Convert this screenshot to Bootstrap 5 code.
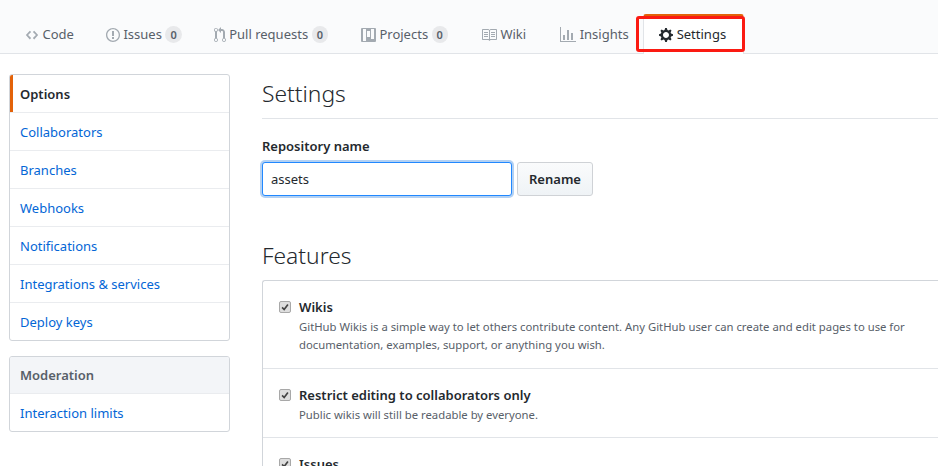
<!DOCTYPE html>
<html lang="en">
  <head>
    <meta charset="utf-8" />
    <title>Settings</title>
    <link href="https://cdn.jsdelivr.net/npm/bootstrap@5.3.3/dist/css/bootstrap.min.css" rel="stylesheet" />
    <style>
      html, body { overflow: hidden; height: 466px; }
      body { font-family: "Noto Sans", "Open Sans", sans-serif; font-size: 13px; color: #24292e; background: #fff; }
      .repo-head { height: 54px; background: #fafbfc; border-bottom: 1px solid #e1e4e8; padding-left: 9px; }
      .repo-tab { height: 39px; padding: 0 16px; color: #586069; gap: 3.5px; text-decoration: none; white-space: nowrap; margin-bottom: -1px; }
      .repo-tab svg { fill: #a3aab1; flex: none; }
      .tab-count { background: rgba(27,31,35,.08); color: #586069; font-size: 11px; font-weight: 600; line-height: 1; padding: 3px 5px; border-radius: 20px; }
      .tab-projects { margin-left: 1px; }
      .tab-wiki { margin-left: 1px; margin-right: 2px; }
      .tab-on { position: relative; background: #fff; color: #24292e; border: 1px solid #e1e4e8; border-top: 3px solid #e36209; border-bottom: 0; border-radius: 3px 3px 0 0; height: 40px; width: 101px; margin-left: -2px; padding: 0 15px 1px; gap: 4px; }
      .tab-on svg { fill: #24292e; }
      .red-box { position: absolute; left: 636px; top: 16px; width: 109px; height: 36px; border: 3px solid #fb1a12; border-radius: 3px; }
      .page-body { padding: 20px 0 0 9px; gap: 32px; width: 938px; }
      .side-col { width: 221px; flex: none; }
      .side-menu { border: 1px solid #d1d5da; border-radius: 3px; margin-bottom: 15px; overflow: hidden; }
      .side-item { display: block; height: 38px; line-height: 38px; padding-left: 10px; color: #0366d6; text-decoration: none; border-top: 1px solid #eaecef; white-space: nowrap; }
      .side-item:first-child { border-top: 0; height: 37px; line-height: 38px; }
      .side-sel { font-weight: 600; color: #24292e; border-left: 3px solid #e36209; padding-left: 7px; }
      .side-title { background: #f3f5f8; font-weight: 600; color: #586069; height: 36px; line-height: 37px; padding-left: 10px; }
      .main-col { flex: 1; min-width: 0; }
      .sec-title { font-size: 22.8px; font-weight: 300; line-height: 32px; padding-bottom: 8px; margin: 0; }
      .title-rule { border-bottom: 1px solid #e1e4e8; height: 45px; line-height: 40px; padding: 0; }
      .feat-title { margin-top: 44px; }
      .field-label { font-weight: 600; margin: 17px 0 6px; line-height: 20px; display: block; }
      .name-input { width: 250px; height: 34px; padding: 6px 8px; font-size: 13px; color: #24292e; border: 1px solid #2188ff; border-radius: 3px; box-shadow: 0 0 0 2px rgba(3,102,214,.3); outline: 0; font-family: inherit; }
      .rename-btn { height: 34px; width: 76px; padding: 1px 0 0; font-size: 13px; font-weight: 600; color: #24292e; border: 1px solid #cfd2d6; border-radius: 3px; background: linear-gradient(#fafbfc, #eff3f6); }
      .rename-gap { gap: 5px; }
      .feature-box { border: 1px solid #d1d5da; border-right: 0; border-radius: 3px 0 0 0; }
      .feature-row { padding: 16px 0 0 16px; gap: 8px; border-top: 1px solid #e1e4e8; height: 69px; }
      .feature-row:first-child { border-top: 0; height: 87px; }
      .feature-name { font-weight: 600; line-height: 20px; }
      .feature-note { font-size: 11.3px; line-height: 18px; color: #586069; margin-top: 1px; }
      .tick { appearance: none; width: 12px; height: 12px; margin: 4px 0 0; flex: none; border: 1px solid #a8a8a8; border-radius: 2px; background: #dedede url("data:image/svg+xml,%3Csvg xmlns='http://www.w3.org/2000/svg' viewBox='0 0 12 12'%3E%3Cpath d='M2.5 6.5 5 9l4.5-6' fill='none' stroke='%23444' stroke-width='2'/%3E%3C/svg%3E") center / 10px no-repeat; }
    </style>
  </head>
  <body>
    <header class="repo-head d-flex align-items-end">
      <a class="repo-tab d-flex align-items-center" href="#">
        <svg width="14" height="14" viewBox="0 0 14 16"><path d="M9.5 3 8 4.5 11.5 8 8 11.5 9.5 13 14 8zm-5 0L0 8l4.5 5L6 11.5 2.5 8 6 4.5z"/></svg>Code</a>
      <a class="repo-tab d-flex align-items-center" href="#">
        <svg width="14" height="16" viewBox="0 0 14 16"><path d="M7 2.3c3.14 0 5.7 2.56 5.7 5.7s-2.56 5.7-5.7 5.7A5.71 5.71 0 0 1 1.3 8c0-3.14 2.56-5.7 5.7-5.7zM7 1C3.14 1 0 4.14 0 8s3.14 7 7 7 7-3.14 7-7-3.14-7-7-7zm1 3H6v5h2zm0 6H6v2h2z"/></svg>Issues<span class="tab-count">0</span></a>
      <a class="repo-tab d-flex align-items-center" href="#">
        <svg width="12" height="16" viewBox="0 0 12 16"><path d="M11 11.28V5c-.03-.78-.34-1.47-.94-2.06C9.46 2.35 8.78 2.03 8 2H7V0L4 3l3 3V4h1c.27.02.48.11.69.31.21.2.3.42.31.69v6.28A1.993 1.993 0 0 0 10 15a1.993 1.993 0 0 0 1-3.72zm-1 2.92c-.66 0-1.2-.55-1.2-1.2 0-.65.55-1.2 1.2-1.2.65 0 1.2.55 1.2 1.2 0 .65-.55 1.2-1.2 1.2zM4 3c0-1.11-.89-2-2-2a1.993 1.993 0 0 0-1 3.72v6.56A1.993 1.993 0 0 0 2 15a1.993 1.993 0 0 0 1-3.72V4.72c.59-.34 1-.98 1-1.72zm-.8 10c0 .66-.55 1.2-1.2 1.2-.65 0-1.2-.55-1.2-1.2 0-.65.55-1.2 1.2-1.2.65 0 1.2.55 1.2 1.2zM2 4.2C1.34 4.2.8 3.65.8 3c0-.65.55-1.2 1.2-1.2.65 0 1.2.55 1.2 1.2 0 .65-.55 1.2-1.2 1.2z"/></svg>Pull requests<span class="tab-count">0</span></a>
      <a class="repo-tab tab-projects d-flex align-items-center" href="#">
        <svg width="15" height="16" viewBox="0 0 15 16"><path d="M10 12h3V2h-3zM6 4h3V2H6zm0 6h3V2H6zM2 14h3V2H2zM1 1h13a1 1 0 0 1 1 1v12a1 1 0 0 1-1 1H1a1 1 0 0 1-1-1V2a1 1 0 0 1 1-1z" fill-rule="evenodd"/></svg>Projects<span class="tab-count">0</span></a>
      <a class="repo-tab tab-wiki d-flex align-items-center" href="#">
        <svg width="16" height="16" viewBox="0 0 16 16"><path d="M3 5h4v1H3zm0 3h4V7H3zm0 2h4V9H3zm11-5h-4v1h4zm0 2h-4v1h4zm0 2h-4v1h4zm2-6v9c0 .55-.45 1-1 1H9.5l-1 1-1-1H2c-.55 0-1-.45-1-1V3c0-.55.45-1 1-1h5.5l1 1 1-1H15c.55 0 1 .45 1 1zm-8 .5L7.5 3H2v9h6zm7-.5H9.5l-.5.5V12h6z"/></svg>Wiki</a>
      <a class="repo-tab d-flex align-items-center" href="#">
        <svg width="16" height="16" viewBox="0 0 16 16"><path d="M16 14v1H0V0h1v14zM5 13H3V8h2zm4 0H7V3h2zm4 0h-2V6h2z"/></svg>Insights</a>
      <a class="repo-tab tab-on d-flex align-items-center" href="#">
        <svg width="14" height="16" viewBox="0 0 14 16"><path d="M14 8.77v-1.6l-1.94-.64-.45-1.09.88-1.84-1.13-1.13-1.81.91-1.09-.45-.69-1.92h-1.6l-.63 1.94-1.11.45-1.84-.88-1.13 1.13.91 1.81-.45 1.09L0 7.23v1.59l1.94.64.45 1.09-.88 1.84 1.13 1.13 1.81-.91 1.09.45.69 1.92h1.59l.63-1.94 1.11-.45 1.84.88 1.13-1.13-.92-1.81.47-1.09zM7 11c-1.66 0-3-1.34-3-3s1.34-3 3-3 3 1.34 3 3-1.34 3-3 3z" fill-rule="evenodd"/></svg>Settings</a>
    </header>
    <div class="red-box"></div>

    <div class="page-body d-flex">
      <nav class="side-col">
        <div class="side-menu">
          <a class="side-item side-sel" href="#">Options</a>
          <a class="side-item" href="#">Collaborators</a>
          <a class="side-item" href="#">Branches</a>
          <a class="side-item" href="#">Webhooks</a>
          <a class="side-item" href="#">Notifications</a>
          <a class="side-item" href="#">Integrations &amp; services</a>
          <a class="side-item" href="#">Deploy keys</a>
        </div>
        <div class="side-menu">
          <div class="side-title">Moderation</div>
          <a class="side-item" href="#">Interaction limits</a>
        </div>
      </nav>

      <main class="main-col">
        <h2 class="sec-title title-rule">Settings</h2>
        <label class="field-label">Repository name</label>
        <div class="d-flex rename-gap align-items-center">
          <input class="name-input" type="text" value="assets" />
          <button class="rename-btn" type="button">Rename</button>
        </div>
        <h2 class="sec-title feat-title">Features</h2>
        <div class="feature-box">
          <div class="feature-row d-flex">
            <input class="tick" type="checkbox" checked />
            <div>
              <div class="feature-name">Wikis</div>
              <div class="feature-note">GitHub Wikis is a simple way to let others contribute content. Any GitHub user can create and edit pages to use for<br />documentation, examples, support, or anything you wish.</div>
            </div>
          </div>
          <div class="feature-row d-flex">
            <input class="tick" type="checkbox" checked />
            <div>
              <div class="feature-name">Restrict editing to collaborators only</div>
              <div class="feature-note">Public wikis will still be readable by everyone.</div>
            </div>
          </div>
          <div class="feature-row d-flex">
            <input class="tick" type="checkbox" checked />
            <div>
              <div class="feature-name">Issues</div>
            </div>
          </div>
        </div>
      </main>
    </div>
    <script src="https://cdn.jsdelivr.net/npm/bootstrap@5.3.3/dist/js/bootstrap.bundle.min.js"></script>
  </body>
</html>
